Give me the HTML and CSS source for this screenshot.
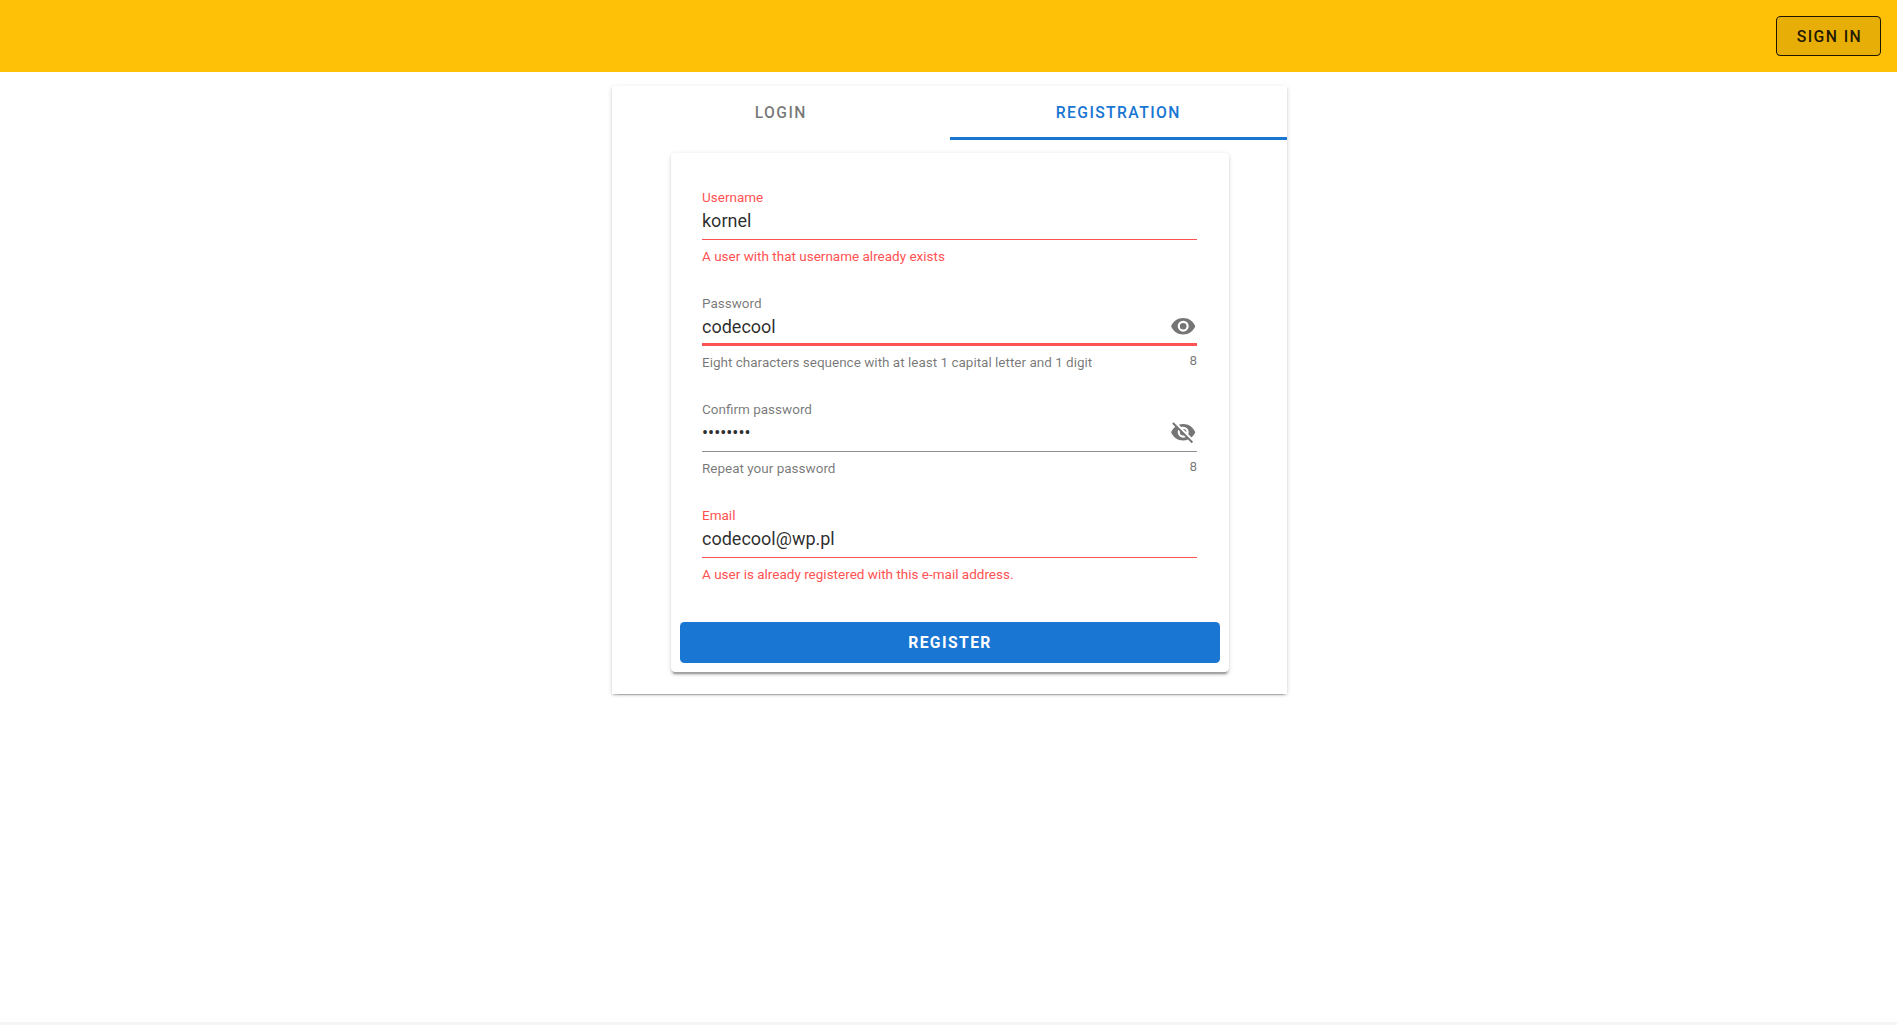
FILE: index.html
```html
<!DOCTYPE html>
<html lang="en">
<head>
<meta charset="utf-8">
<title>Registration</title>
<link rel="stylesheet" href="styles.css">
</head>
<body>
<header class="app-bar">
  <button class="btn-sign-in" type="button">SIGN IN</button>
</header>
<main class="main">
  <section class="auth-card">
    <nav class="tabs">
      <a class="tab">LOGIN</a>
      <a class="tab tab-active">REGISTRATION</a>
    </nav>
    <form class="form-card">
      <div class="fields">
        <div class="field field-error">
          <label class="label" for="username">Username</label>
          <div class="control"><input class="input" id="username" type="text" value="kornel"></div>
          <div class="details"><span class="hint">A user with that username already exists</span></div>
        </div>
        <div class="field field-focused">
          <label class="label" for="password">Password</label>
          <div class="control">
            <input class="input" id="password" type="text" value="codecool">
            <svg class="icon" viewBox="0 0 24 24"><path d="M12,9A3,3 0 0,0 9,12A3,3 0 0,0 12,15A3,3 0 0,0 15,12A3,3 0 0,0 12,9M12,17A5,5 0 0,1 7,12A5,5 0 0,1 12,7A5,5 0 0,1 17,12A5,5 0 0,1 12,17M12,4.5C7,4.5 2.73,7.61 1,12C2.73,16.39 7,19.5 12,19.5C17,19.5 21.27,16.39 23,12C21.27,7.61 17,4.5 12,4.5Z"/></svg>
          </div>
          <div class="details"><span class="hint">Eight characters sequence with at least 1 capital letter and 1 digit</span><span class="counter">8</span></div>
        </div>
        <div class="field">
          <label class="label" for="confirm">Confirm password</label>
          <div class="control">
            <input class="input" id="confirm" type="password" value="codecool">
            <svg class="icon" viewBox="0 0 24 24"><path d="M11.83,9L15,12.16C15,12.11 15,12.05 15,12A3,3 0 0,0 12,9C11.94,9 11.89,9 11.83,9M7.53,9.8L9.08,11.35C9.03,11.56 9,11.77 9,12A3,3 0 0,0 12,15C12.22,15 12.44,14.97 12.65,14.92L14.2,16.47C13.53,16.8 12.79,17 12,17A5,5 0 0,1 7,12C7,11.21 7.2,10.47 7.53,9.8M2,4.27L4.28,6.55L4.73,7C3.08,8.3 1.78,10 1,12C2.73,16.39 7,19.5 12,19.5C13.55,19.5 15.03,19.2 16.38,18.66L16.81,19.08L19.73,22L21,20.73L3.27,3M12,7A5,5 0 0,1 17,12C17,12.64 16.87,13.26 16.64,13.82L19.57,16.75C21.07,15.5 22.27,13.86 23,12C21.27,7.61 17,4.5 12,4.5C10.6,4.5 9.26,4.75 8,5.2L10.17,7.35C10.74,7.13 11.35,7 12,7Z"/></svg>
          </div>
          <div class="details"><span class="hint">Repeat your password</span><span class="counter">8</span></div>
        </div>
        <div class="field field-error">
          <label class="label" for="email">Email</label>
          <div class="control"><input class="input" id="email" type="text" value="codecool@wp.pl"></div>
          <div class="details"><span class="hint">A user is already registered with this e-mail address.</span></div>
        </div>
      </div>
      <button class="btn-register" type="button">REGISTER</button>
    </form>
  </section>
</main>
<footer class="footer"></footer>
</body>
</html>
```
FILE: styles.css
```css
* { box-sizing: border-box; }

body {
  margin: 0;
  height: 100vh;
  display: flex;
  flex-direction: column;
  overflow: hidden;
  background: #fff;
  color: rgba(0, 0, 0, 0.87);
  font-family: Roboto, sans-serif;
  font-size: 18px;
}

button, input { font-family: inherit; margin: 0; }

.app-bar {
  height: 72px;
  flex: none;
  display: flex;
  justify-content: flex-end;
  align-items: center;
  padding-right: 16px;
  background: #ffc107;
}

.btn-sign-in {
  width: 105px;
  height: 40px;
  padding: 1px 0 0 2px;
  border: 1px solid rgba(0, 0, 0, 0.87);
  border-radius: 4.4px;
  background: #e6ae06;
  color: rgba(0, 0, 0, 0.87);
  font-size: 15.8px;
  font-weight: 500;
  letter-spacing: 0.0892857143em;
}

.main {
  flex: 1;
  padding-top: 14px;
}

.auth-card, .form-card {
  background: #fff;
  box-shadow: 0 3.3px 1.1px -2.2px rgba(0, 0, 0, 0.2), 0 2.2px 2.2px 0 rgba(0, 0, 0, 0.14), 0 1.1px 5.5px 0 rgba(0, 0, 0, 0.12);
}

.auth-card {
  width: 675px;
  height: 608px;
  margin-left: 612px;
}

.tabs {
  display: grid;
  grid-template-columns: 1fr 1fr;
  height: 54px;
}

.tab {
  display: flex;
  align-items: center;
  justify-content: center;
  padding-top: 2px;
  border-bottom: 3px solid transparent;
  color: rgba(0, 0, 0, 0.54);
  font-size: 15.7px;
  font-weight: 500;
  letter-spacing: 0.0892857143em;
}

.tab-active {
  color: #1976d2;
  border-color: #1976d2;
}

.form-card {
  width: 558px;
  height: 519px;
  margin: 13px 0 0 59px;
  padding: 33px 9px 9px;
  border-radius: 4.4px;
  display: flex;
  flex-direction: column;
}

.fields {
  flex: 1;
  padding: 0 23px 0 22px;
}

.field {
  height: 106px;
  display: flex;
  flex-direction: column;
  color: rgba(0, 0, 0, 0.55);
}

.label {
  height: 22px;
  line-height: 22px;
  font-size: 13.5px;
}

.control {
  height: 32px;
  display: flex;
  align-items: center;
  padding-bottom: 5px;
  border-bottom: 1px solid #8f8f8f;
}

.input {
  flex: 1;
  min-width: 0;
  height: 26px;
  padding: 0 0 1px;
  border: 0;
  outline: 0;
  background: none;
  color: rgba(0, 0, 0, 0.84);
  font-size: 18px;
}

.icon {
  width: 26.4px;
  height: 26.4px;
  margin: 0 0.3px 0.8px 0;
  fill: rgba(0, 0, 0, 0.54);
}

.details {
  display: flex;
  justify-content: space-between;
  padding-top: 8px;
  font-size: 13.5px;
  line-height: 16px;
}

.counter { margin-top: -2px; }

.field-error { color: #ff5252; }
.field-error .control { border-color: #ff5252; }

.field-focused .control {
  border-bottom: 3px solid #ff5252;
  padding-bottom: 3px;
}

.btn-register {
  height: 41px;
  padding: 0;
  border: 0;
  border-radius: 4.4px;
  background: #1976d2;
  color: #fff;
  font-size: 15.7px;
  font-weight: 700;
  letter-spacing: 0.0892857143em;
}

.footer {
  flex: none;
  height: 3px;
  background: #f5f5f5;
}
```
